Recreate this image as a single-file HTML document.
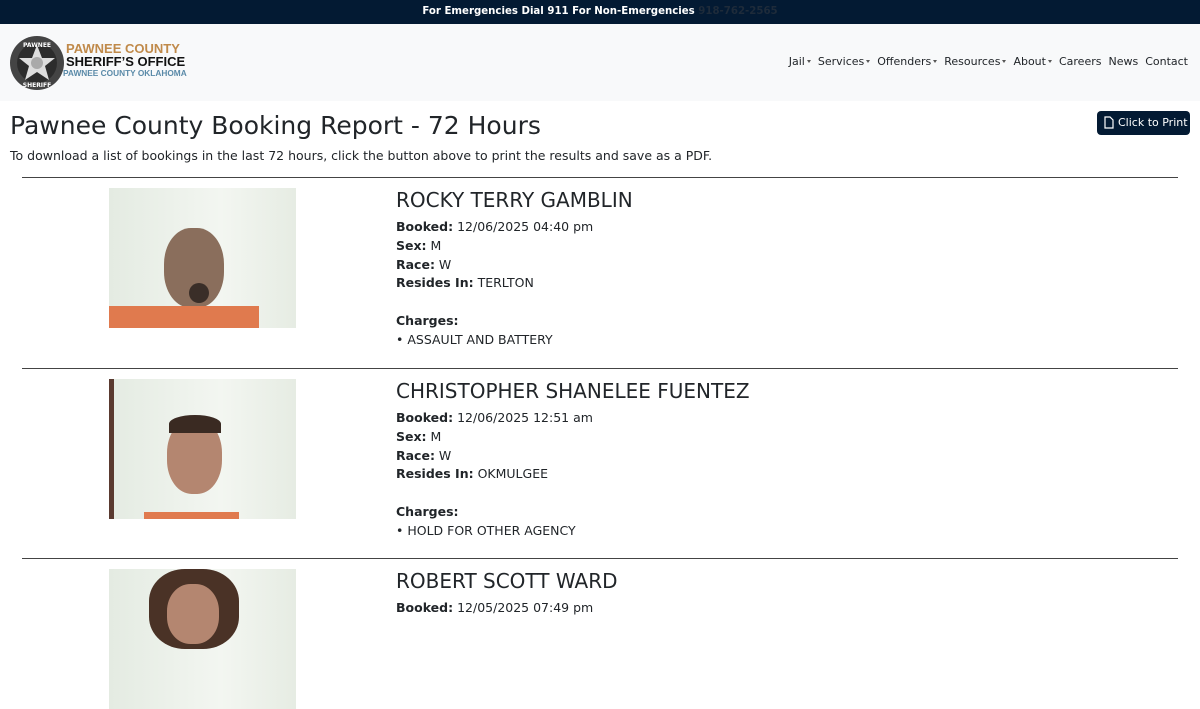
<!DOCTYPE html>
<html><head><meta charset="utf-8"><style>
*{box-sizing:border-box;margin:0;padding:0}
body{width:1200px;height:620px;overflow:hidden;font-family:"DejaVu Sans","Liberation Sans",sans-serif;color:#212529;background:#fff}
.top{height:24px;background:#031a33;color:#fff;font-size:10.2px;font-weight:bold;text-align:center;line-height:24px}
.top span{color:#1e2b3a}
.nav{height:77px;background:#f8f9fa;position:relative}
.logo{position:absolute;left:9px;top:11px}
.lt{position:absolute;left:66px;top:18px;font-family:"Liberation Sans",sans-serif;font-weight:bold;line-height:13px}
.menu{position:absolute;right:12px;top:31px;font-size:11px;color:#212529}
.menu span{margin-left:7px}
.c{display:inline-block;border-top:3px solid #555;border-left:2.5px solid transparent;border-right:2.5px solid transparent;vertical-align:middle;margin-left:2px;margin-bottom:2px}
h1{position:absolute;left:10px;top:111px;font-weight:normal;font-size:25px}
.sub{position:absolute;left:10px;top:148px;font-size:12.5px}
.btn{position:absolute;left:1097px;top:111px;width:93px;height:24px;background:#031a33;color:#fff;border-radius:4px;font-size:11px;line-height:24px;padding-left:21px}
.rec{position:absolute;left:22px;width:1156px;border-top:1px solid #444}
.ph{position:absolute;left:87px;width:187px;height:140px;background:linear-gradient(90deg,#e4ebe2,#f3f6f1 60%,#e6ece3);overflow:hidden}
.info{position:absolute;left:374px;font-size:12.5px;line-height:18.8px}
.info .n{font-size:20px;line-height:24px;margin-bottom:6px}
</style></head><body>
<div class="top">For Emergencies Dial 911 For Non-Emergencies <span>918-762-2565</span></div>
<div class="nav">
<svg class="logo" width="56" height="56" viewBox="0 0 56 56"><circle cx="28" cy="28" r="27" fill="#444"/><circle cx="28" cy="28" r="20" fill="#2c2c2c"/><polygon points="28,10 33,23 46,23 36,31 40,45 28,37 16,45 20,31 10,23 23,23" fill="#ddd"/><circle cx="28" cy="28" r="6" fill="#aaa"/><text x="28" y="12" font-size="6" fill="#fff" text-anchor="middle" font-weight="bold">PAWNEE</text><text x="28" y="52" font-size="6" fill="#fff" text-anchor="middle" font-weight="bold">SHERIFF</text></svg>
<div class="lt"><div style="color:#c08a4a;font-size:13px">PAWNEE COUNTY</div><div style="color:#111;font-size:13px">SHERIFF’S OFFICE</div><div style="color:#5a8aa8;font-size:8.3px;margin-left:-3px;line-height:10px">PAWNEE COUNTY OKLAHOMA</div></div>
<div class="menu"><span>Jail<i class="c"></i></span><span>Services<i class="c"></i></span><span>Offenders<i class="c"></i></span><span>Resources<i class="c"></i></span><span>About<i class="c"></i></span><span>Careers</span><span>News</span><span>Contact</span></div>
</div>
<h1>Pawnee County Booking Report - 72 Hours</h1>
<div class="sub">To download a list of bookings in the last 72 hours, click the button above to print the results and save as a PDF.</div>
<div class="btn"><svg style="position:absolute;left:7px;top:5px" width="10" height="13" viewBox="0 0 10 13"><path d="M1 1h5l3 3v8H1z" fill="none" stroke="#fff" stroke-width="1.2"/></svg>Click to Print</div>

<div class="rec" style="top:177px">
<div class="ph" style="top:10px"><div style="position:absolute;left:55px;top:40px;width:60px;height:80px;border-radius:45%;background:#8a6e5c"></div><div style="position:absolute;left:0;top:118px;width:150px;height:30px;background:#e07a4e"></div><div style="position:absolute;left:80px;top:95px;width:20px;height:20px;background:#3a2e28;border-radius:50%"></div></div>
<div class="info" style="top:10px"><div class="n">ROCKY TERRY GAMBLIN</div><b>Booked:</b> 12/06/2025 04:40 pm<br><b>Sex:</b> M<br><b>Race:</b> W<br><b>Resides In:</b> TERLTON<br><br><b>Charges:</b><br>• ASSAULT AND BATTERY</div>
</div>
<div class="rec" style="top:368px">
<div class="ph" style="top:10px"><div style="position:absolute;left:0;top:0;width:5px;height:140px;background:#5a3a30"></div><div style="position:absolute;left:58px;top:40px;width:55px;height:75px;border-radius:45%;background:#b48670"></div><div style="position:absolute;left:60px;top:36px;width:52px;height:18px;border-radius:50% 50% 0 0;background:#3a2a22"></div><div style="position:absolute;left:35px;top:133px;width:95px;height:10px;background:#e07a4e"></div></div>
<div class="info" style="top:10px"><div class="n">CHRISTOPHER SHANELEE FUENTEZ</div><b>Booked:</b> 12/06/2025 12:51 am<br><b>Sex:</b> M<br><b>Race:</b> W<br><b>Resides In:</b> OKMULGEE<br><br><b>Charges:</b><br>• HOLD FOR OTHER AGENCY</div>
</div>
<div class="rec" style="top:558px">
<div class="ph" style="top:10px"><div style="position:absolute;left:40px;top:0;width:90px;height:80px;border-radius:40%;background:#4a3226"></div><div style="position:absolute;left:58px;top:15px;width:52px;height:60px;border-radius:45%;background:#b48670"></div></div>
<div class="info" style="top:10px"><div class="n">ROBERT SCOTT WARD</div><b>Booked:</b> 12/05/2025 07:49 pm</div>
</div>
</body></html>
